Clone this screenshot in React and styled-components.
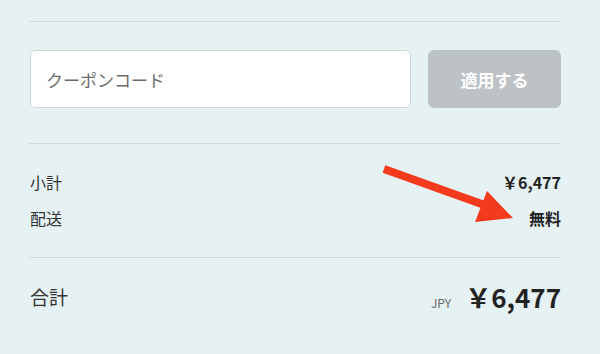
import React from "react";
import styled, { createGlobalStyle } from "styled-components";

const GlobalStyle = createGlobalStyle`
  html, body {
    margin: 0;
    padding: 0;
    background: #e6f1f4;
  }
  body {
    font-family: "Noto Sans CJK JP", "Noto Sans", sans-serif;
    color: #333;
  }
`;

const Page = styled.div`
  position: relative;
  width: 600px;
  height: 354px;
  box-sizing: border-box;
  padding: 21px 39px 0 29px;
  overflow: hidden;
`;

const Divider = styled.div`
  height: 1px;
  background: #cfdcdf;
`;

const CouponRow = styled.div`
  display: flex;
  gap: 17px;
  padding: 28px 0 35px 1px;
`;

const Input = styled.input`
  flex: 1;
  height: 58px;
  box-sizing: border-box;
  border: 1px solid #cdd6d9;
  border-radius: 5px;
  background: #fff;
  padding: 0 15px;
  font-family: inherit;
  font-size: 17px;
  color: #333;
  outline: none;
  &::placeholder {
    color: #6b6b6b;
  }
`;

const Button = styled.button`
  width: 133px;
  height: 58px;
  border: none;
  border-radius: 6px;
  background: #bcc2c5;
  color: #fff;
  font-family: inherit;
  font-size: 17px;
  font-weight: 700;
`;

const Lines = styled.div`
  padding: 20px 0 21px 1px;
`;

const Row = styled.div`
  display: flex;
  justify-content: space-between;
  align-items: center;
  height: 36px;
`;

const Label = styled.span`
  font-size: ${(p) => (p.big ? "19px" : "16px")};
  color: #333;
`;

const Value = styled.span`
  font-size: 16px;
  font-weight: 700;
  color: #222;
`;

const TotalRow = styled.div`
  display: flex;
  justify-content: space-between;
  align-items: center;
  padding: 18px 0 0 1px;
  height: 40px;
`;

const Amount = styled.div`
  display: flex;
  align-items: baseline;
  gap: 14px;
`;

const Currency = styled.span`
  font-size: 12px;
  color: #666;
`;

const Total = styled.span`
  font-size: 26px;
  font-weight: 700;
  color: #222;
`;

const Arrow = styled.svg`
  position: absolute;
  left: 0;
  top: 0;
  pointer-events: none;
`;

export default function App() {
  return (
    <>
      <GlobalStyle />
      <Page>
        <Divider />
        <CouponRow>
          <Input placeholder="クーポンコード" />
          <Button>適用する</Button>
        </CouponRow>
        <Divider />
        <Lines>
          <Row>
            <Label>小計</Label>
            <Value>￥6,477</Value>
          </Row>
          <Row>
            <Label>配送</Label>
            <Value>無料</Value>
          </Row>
        </Lines>
        <Divider />
        <TotalRow>
          <Label big>合計</Label>
          <Amount>
            <Currency>JPY</Currency>
            <Total>￥6,477</Total>
          </Amount>
        </TotalRow>
        <Arrow width="600" height="354" viewBox="0 0 600 354">
          <line x1="384" y1="169" x2="490" y2="207" stroke="#f43a1c" strokeWidth="8" />
          <polygon points="487,191 513,218 475,222" fill="#f43a1c" />
        </Arrow>
      </Page>
    </>
  );
}
